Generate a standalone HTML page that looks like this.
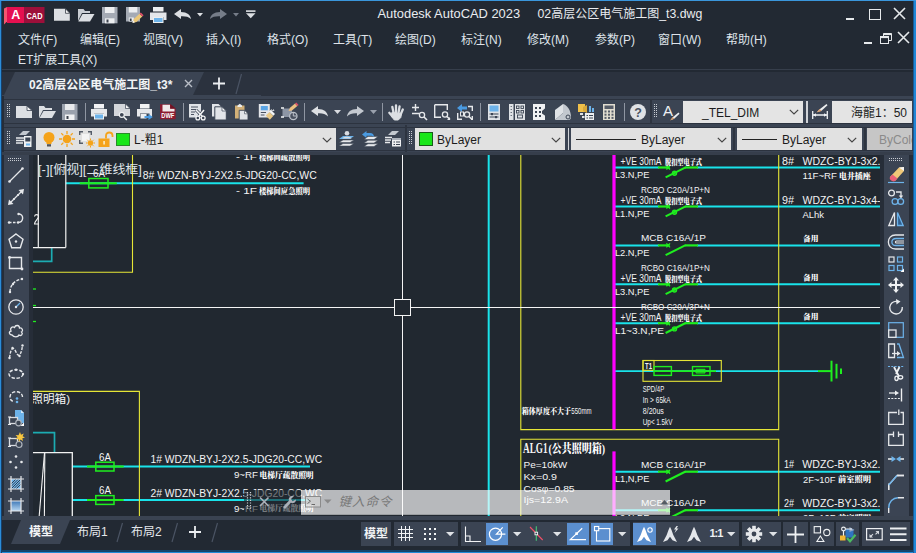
<!DOCTYPE html>
<html><head><meta charset="utf-8"><title>Autodesk AutoCAD 2023</title>
<style>
html,body{margin:0;padding:0;background:#222933;}
body{width:916px;height:553px;overflow:hidden;position:relative;font-family:"Liberation Sans","Noto Sans CJK SC",sans-serif;color:#e6e9ee;}
#win{position:absolute;left:0;top:0;width:916px;height:553px;background:#222933;overflow:hidden;}
.abs{position:absolute;display:block;}
.t{position:absolute;white-space:nowrap;line-height:1;transform-origin:0 50%;}
.menu{font-size:12px;color:#dfe3e9;top:33.5px;}
.menu2{top:53.8px;}
.cb{font-size:12px;color:#1c1c1c;}
</style></head><body>
<div id="win">
<div class="t" id="ttl1" style="left:377.5px;top:7.5px;font-size:12.9px;color:#e9ecf0;">Autodesk AutoCAD 2023</div>
<div class="t" id="ttl2" style="left:537.5px;top:7.5px;font-size:12.3px;color:#e9ecf0;">02<span style="font-size:12px">高层公区电气施工图</span>_t3.dwg</div>
<svg class="abs" style="left:4px;top:7px" width="41" height="18" viewBox="0 0 41 18" ><polygon points="0,1.5 3,0 3,14.5 0,17.5" fill="#f2566f"/><rect x="3" y="0" width="17.5" height="16" fill="#e51050"/><rect x="20.5" y="0" width="20" height="16" fill="#9c0f3a"/><text x="11.7" y="12.3" font-size="12.5" font-weight="bold" fill="#fff" text-anchor="middle" font-family="Liberation Sans, sans-serif">A</text><text x="30.5" y="11.5" font-size="8.5" font-weight="bold" fill="#fff" text-anchor="middle" font-family="Liberation Sans, sans-serif" textLength="16" lengthAdjust="spacingAndGlyphs">CAD</text></svg>
<svg class="abs" style="left:54px;top:8px" width="17" height="14" viewBox="0 0 17 14" ><path d="M0 0.800H11.500L15.800 5.300V12.800H0Z" fill="#dcdfe3"/><path d="M11.500 0.800V5.300H15.800Z" fill="#f6f7f8" stroke="#222933" stroke-width="0.7"/></svg>
<svg class="abs" style="left:78px;top:8px" width="18" height="14" viewBox="0 0 18 14" ><path d="M0 1H5.500L7 3H12V5H4L0 13Z" fill="#c9cdd3"/><path d="M4.500 6H16.500L12 13.500H0.300Z" fill="#dcdfe3"/></svg>
<svg class="abs" style="left:102px;top:7px" width="16" height="17" viewBox="0 0 16 17" ><path d="M0 0H15.500V16.300H0Z" fill="#a4aab4"/><rect x="3" y="0" width="9.500" height="6" fill="#eceef0"/><rect x="3" y="11.300" width="9.500" height="5" fill="#eceef0"/><rect x="4.500" y="12.500" width="2" height="3" fill="#3a414d"/></svg>
<svg class="abs" style="left:126px;top:7px" width="18" height="17" viewBox="0 0 18 17" ><path d="M0 0H14V14.500H0Z" fill="#a4aab4"/><rect x="2.800" y="0" width="8.500" height="5.500" fill="#eceef0"/><rect x="2.800" y="10.500" width="5" height="4" fill="#eceef0"/><rect x="3.800" y="11.500" width="1.800" height="2.500" fill="#3a414d"/><path d="M6.500 16L7.800 12L13.500 6.800L16.300 9.600L10.500 15Z" fill="#ecc878"/><path d="M13.500 6.800L14.800 5.600L17.600 8.300L16.300 9.600Z" fill="#e0506a"/><path d="M6.500 16L7.300 13.500L9 15.300Z" fill="#f4f4f4"/></svg>
<svg class="abs" style="left:150px;top:7px" width="17" height="17" viewBox="0 0 17 17" ><rect x="3" y="0" width="10.500" height="4.500" fill="#eceef0"/><path d="M0 5.500H16.500V13H13.500V10H3V13H0Z" fill="#e4e6ea"/><rect x="3.500" y="10.500" width="9.500" height="5" fill="#6db3ea" stroke="#eceef0" stroke-width="1"/></svg>
<svg class="abs" style="left:174px;top:9px" width="18" height="11" viewBox="0 0 18 11" ><path d="M0 5L7 0V3C13 3 16.5 6 17 10C14.5 7.5 11 7 7 7.2V10Z" fill="#dcdfe3"/></svg>
<svg class="abs" style="left:196.5px;top:13px" width="6" height="3.5" viewBox="0 0 6 3.5" ><path d="M0 0H6L3 3.400Z" fill="#dcdfe3"/></svg>
<svg class="abs" style="left:209px;top:9px" width="18" height="11" viewBox="0 0 18 11" ><g transform="translate(18,0) scale(-1,1)"><path d="M0 5L7 0V3C13 3 16.5 6 17 10C14.5 7.5 11 7 7 7.2V10Z" fill="#767d89"/></g></svg>
<svg class="abs" style="left:232.5px;top:13px" width="6" height="3.5" viewBox="0 0 6 3.5" ><path d="M0 0H6L3 3.400Z" fill="#767d89"/></svg>
<svg class="abs" style="left:245.5px;top:10px" width="10" height="9" viewBox="0 0 10 9" ><rect x="0" y="0.300" width="9.500" height="1.600" fill="#dcdfe3"/><path d="M0 3.200H9.500L4.750 8.300Z" fill="#dcdfe3"/></svg>
<div class="abs" style="left:846px;top:18px;width:8px;height:2px;background:#e6e9ec"></div>
<div class="abs" style="left:869px;top:9px;width:10px;height:8.700px;border:1px solid #e6e9ec;box-sizing:content-box"></div>
<svg class="abs" style="left:893px;top:7px" width="13" height="13" viewBox="0 0 13 13" ><path d="M1 1L12 12M12 1L1 12" stroke="#e6e9ec" stroke-width="1.6" fill="none"/></svg>
<div class="abs" style="left:864px;top:42px;width:8px;height:2px;background:#e6e9ec"></div>
<svg class="abs" style="left:880px;top:33px" width="12" height="11" viewBox="0 0 12 11" ><path d="M3.5 3.5V0.5H11.5V7.5H8.5" stroke="#e6e9ec" stroke-width="1" fill="none"/><rect x="0.5" y="3.5" width="8" height="7" stroke="#e6e9ec" stroke-width="1" fill="none"/><rect x="0.5" y="3.5" width="8" height="1.6" fill="#e6e9ec"/><rect x="3.5" y="0.5" width="8" height="1.6" fill="#e6e9ec"/></svg>
<svg class="abs" style="left:897px;top:31px" width="13" height="13" viewBox="0 0 13 13" ><path d="M1 1L12 12M12 1L1 12" stroke="#e6e9ec" stroke-width="1.6" fill="none"/></svg>
<div class="t menu" id="m0" style="left:18px;">文件(F)</div>
<div class="t menu" id="m1" style="left:80px;">编辑(E)</div>
<div class="t menu" id="m2" style="left:143px;">视图(V)</div>
<div class="t menu" id="m3" style="left:206px;">插入(I)</div>
<div class="t menu" id="m4" style="left:267px;">格式(O)</div>
<div class="t menu" id="m5" style="left:333px;">工具(T)</div>
<div class="t menu" id="m6" style="left:395px;">绘图(D)</div>
<div class="t menu" id="m7" style="left:461px;">标注(N)</div>
<div class="t menu" id="m8" style="left:527px;">修改(M)</div>
<div class="t menu" id="m9" style="left:595px;">参数(P)</div>
<div class="t menu" id="m10" style="left:658px;">窗口(W)</div>
<div class="t menu" id="m11" style="left:726px;">帮助(H)</div>
<div class="t menu menu2" id="m12" style="left:18px;">ET扩展工具(X)</div>
<div class="abs" style="left:1px;top:69.3px;width:912px;height:1px;background:#363e4b"></div>
<div class="abs" style="left:1px;top:72px;width:912px;height:25px;background:#2b323e;"></div>
<svg class="abs" style="left:1px;top:72px" width="260" height="25" viewBox="0 0 260 25" ><polygon points="14,0 203,0 192,23 3,23" fill="#3b4453"/><rect x="0" y="23" width="260" height="2" fill="#3b4453"/><path d="M240.5 2L235 22" stroke="#4a5363" stroke-width="1.2"/><path d="M184 8L191 15M191 8L184 15" stroke="#b9bec7" stroke-width="1.4"/><path d="M212 11.5H224M218 5.5V17.5" stroke="#eceef1" stroke-width="1.8"/></svg>
<div class="t" id="tab1" style="left:29px;top:79px;font-size:12px;font-weight:bold;color:#f2f4f6;">02高层公区电气施工图_t3*</div>
<div class="abs" style="left:1px;top:96px;width:912px;height:58px;background:#3b4453;"></div>
<div class="abs" style="left:1px;top:99.3px;width:912px;height:1.2px;background:#2c333f"></div>
<div class="abs" style="left:1px;top:123.2px;width:912px;height:1.3px;background:#2c333f"></div>
<div class="abs" style="left:1px;top:126.6px;width:912px;height:1px;background:#2c333f"></div>
<div class="abs" style="left:1px;top:150.4px;width:912px;height:1.1px;background:#2c333f"></div>
<div class="abs" style="left:1.5px;top:96px;width:2.5px;height:58px;background:#262d38"></div>
<div class="abs" style="left:1px;top:151.500px;width:912px;height:3.500px;background:#363e4b"></div>
<div class="abs" style="left:649.5px;top:99px;width:2px;height:25px;background:#2d3440"></div>
<div class="abs" style="left:404.5px;top:125px;width:2px;height:27px;background:#2d3440"></div>
<svg class="abs" style="left:7px;top:104px" width="4" height="14" viewBox="0 0 4 14" shape-rendering="crispEdges"><path d="M0.5 0V14M2.5 0V14" stroke="#c9cdd3" stroke-width="1" stroke-dasharray="1 1" fill="none"/></svg>
<svg class="abs" style="left:16px;top:104px" width="18" height="18" viewBox="0 0 18 18" overflow="visible"><path d="M0 2H11L16 6.5V14H0Z" fill="#dcdfe3"/><path d="M11 2V6.5H16Z" fill="#f4f5f6" stroke="#3b4453" stroke-width="0.8"/></svg>
<svg class="abs" style="left:39px;top:104px" width="18" height="18" viewBox="0 0 18 18" overflow="visible"><path d="M0 2H5L6.5 4H13V6H4L0 14Z" fill="#dcdfe3"/><path d="M4.5 7H17L13 14H0.5Z" fill="#dcdfe3"/></svg>
<svg class="abs" style="left:62px;top:104px" width="18" height="18" viewBox="0 0 18 18" overflow="visible"><path d="M0 0H15.500V16H0Z" fill="#9aa1ad"/><rect x="3" y="0" width="9.500" height="6" fill="#e8eaed"/><rect x="3" y="10.500" width="9.500" height="5.500" fill="#f0f1f3"/><rect x="4.500" y="12" width="2" height="3" fill="#3a414d"/></svg>
<svg class="abs" style="left:91px;top:104px" width="18" height="18" viewBox="0 0 18 18" overflow="visible"><rect x="3" y="0" width="10" height="4.500" fill="#f2f3f5"/><path d="M0 5H16V12.500H13V9.500H3V12.500H0Z" fill="#e6e8eb"/><rect x="3.500" y="10" width="9" height="5" fill="#6db3ea" stroke="#f2f3f5" stroke-width="1"/></svg>
<svg class="abs" style="left:114px;top:104px" width="18" height="18" viewBox="0 0 18 18" overflow="visible"><path d="M0 0H11.500L16 4.500V12H0Z" fill="#d3d6db"/><path d="M11.500 0V4.500H16Z" fill="#f4f5f6" stroke="#3b4453" stroke-width="0.700"/><circle cx="7.800" cy="10.800" r="2.500" fill="#3b4453" stroke="#eef0f2" stroke-width="1.200"/><path d="M9.700 12.800L12.800 16" stroke="#eef0f2" stroke-width="1.500"/></svg>
<svg class="abs" style="left:137px;top:104px" width="18" height="18" viewBox="0 0 18 18" overflow="visible"><rect x="3" y="0" width="9.500" height="4.500" fill="#f2f3f5"/><path d="M0 5H15V12.500H12.500V9.500H3V12.500H0Z" fill="#e6e8eb"/><rect x="3.500" y="10" width="6" height="4.500" fill="#eef0f2"/><path d="M7.500 12H11.500V10L15.800 13L11.500 16V14H7.500Z" fill="#4a9ae0"/></svg>
<svg class="abs" style="left:160px;top:104px" width="18" height="18" viewBox="0 0 18 18" overflow="visible"><path d="M0 0.300H10.500L15.600 4.500V15.300H0Z" fill="#8c1b30"/><path d="M2.500 0.800H10V4.800H14.500V7.500H2.500Z" fill="#f0e9ea"/><path d="M10.500 0.300L15.600 4.500H10.500Z" fill="#6e1424"/><text x="7.800" y="14.300" font-size="6.800" font-weight="bold" fill="#fff" text-anchor="middle" font-family="Liberation Sans, sans-serif" textLength="13" lengthAdjust="spacingAndGlyphs">DWF</text></svg>
<svg class="abs" style="left:189px;top:104px" width="18" height="18" viewBox="0 0 18 18" overflow="visible"><path d="M0 0H12V13.500H0Z" fill="#dfe2e6"/><path d="M2 3H9M2 5.500H7M2 8H6M2 10.500H5" stroke="#4a5261" stroke-width="1.100"/><path d="M7 6L13.500 12.500M15 6L9.500 12.500" stroke="#3b4453" stroke-width="3"/><path d="M7 6L13.500 12.500M15 6L9.500 12.500" stroke="#f4f5f6" stroke-width="1.500"/><circle cx="8.800" cy="14" r="1.900" fill="#3b4453" stroke="#f4f5f6" stroke-width="1.300"/><circle cx="14.200" cy="14" r="1.900" fill="#3b4453" stroke="#f4f5f6" stroke-width="1.300"/></svg>
<svg class="abs" style="left:212px;top:104px" width="18" height="18" viewBox="0 0 18 18" overflow="visible"><path d="M0 0H6.500L9.500 3V12.500H0Z" fill="#e1e4e8"/><path d="M2.800 2.800H10L14.300 7V16H2.800Z" fill="#e1e4e8" stroke="#3b4453" stroke-width="1"/><path d="M10 2.800V7H14.300Z" fill="#f6f7f8" stroke="#3b4453" stroke-width="0.700"/></svg>
<svg class="abs" style="left:235px;top:104px" width="18" height="18" viewBox="0 0 18 18" overflow="visible"><path d="M0 1.500H9.500V14.500H0Z" fill="#d2b078"/><path d="M2.500 1.500L4.800 -0.300L7 1.500V3H2.500Z" fill="#eceef0"/><path d="M4.200 6.300H9.500L13 9.800V16H4.200Z" fill="#e1e4e8" stroke="#3b4453" stroke-width="0.900"/><path d="M9.500 6.300V9.800H13Z" fill="#f6f7f8" stroke="#3b4453" stroke-width="0.600"/></svg>
<svg class="abs" style="left:258px;top:104px" width="18" height="18" viewBox="0 0 18 18" overflow="visible"><path d="M0.800 0H11.800V13.500H0.800Z" fill="#e4e6ea"/><rect x="2.800" y="2" width="7" height="4.300" fill="#5aa5e6"/><path d="M2.800 8.500H8M2.800 11H6.500" stroke="#4a5261" stroke-width="1.100"/><path d="M7.800 11.500L11.500 8L15.300 12L11.800 15.800Z" fill="#e8c886"/><path d="M11 7.500L12.800 5.800L17 10L15.300 11.800Z" fill="#f4f5f6"/><path d="M13.500 5.500L14.500 7M15.500 5.500L15.800 7" stroke="#f4f5f6" stroke-width="1"/></svg>
<svg class="abs" style="left:281px;top:104px" width="18" height="18" viewBox="0 0 18 18" overflow="visible"><rect x="1.500" y="4.500" width="9.500" height="8.500" fill="#8d96a5"/><path d="M0 4H3M0 13H3" stroke="#f4f5f6" stroke-width="1.600"/><circle cx="12.300" cy="12" r="3.700" fill="#4a5261" stroke="#b9bfc8" stroke-width="1.300"/><path d="M12.300 12V8.800M12.300 12H15.500" stroke="#b9bfc8" stroke-width="1"/><path d="M7.500 7L9 3.800L14 -0.500L16.300 2L11 6.500Z" fill="#ecc080"/><path d="M14 -0.500L15.300 -1.600L17.600 0.900L16.300 2Z" fill="#e0506a"/></svg>
<div class="abs" style="left:85px;top:103px;width:1px;height:18px;background:#8f96a2"></div>
<div class="abs" style="left:183px;top:103px;width:1px;height:18px;background:#8f96a2"></div>
<div class="abs" style="left:304px;top:103px;width:1px;height:18px;background:#8f96a2"></div>
<div class="abs" style="left:382px;top:103px;width:1px;height:18px;background:#8f96a2"></div>
<div class="abs" style="left:480px;top:103px;width:1px;height:18px;background:#8f96a2"></div>
<div class="abs" style="left:624px;top:103px;width:1px;height:18px;background:#8f96a2"></div>
<svg class="abs" style="left:311px;top:105px" width="18" height="18" viewBox="0 0 18 18" overflow="visible"><path d="M0 6L7 1V4C13 4 16.5 7 17 11.5C14.5 8.5 11 8 7 8.2V11Z" fill="#dcdfe3"/></svg>
<svg class="abs" style="left:334px;top:110px" width="7" height="4" viewBox="0 0 7 4" ><path d="M0 0H7L3.5 4Z" fill="#d9dce1"/></svg>
<svg class="abs" style="left:347px;top:105px" width="18" height="18" viewBox="0 0 18 18" overflow="visible"><g transform="translate(17,0) scale(-1,1)"><path d="M0 6L7 1V4C13 4 16.5 7 17 11.5C14.5 8.5 11 8 7 8.2V11Z" fill="#c3c8cf"/></g></svg>
<svg class="abs" style="left:370px;top:110px" width="7" height="4" viewBox="0 0 7 4" ><path d="M0 0H7L3.5 4Z" fill="#9aa1ad"/></svg>
<svg class="abs" style="left:388px;top:104px" width="18" height="18" viewBox="0 0 18 18" overflow="visible"><g stroke="#dcdfe3" stroke-width="2.300" stroke-linecap="round"><path d="M5.600 9L4.300 2.800M8 8.500V1.300M10.500 9L11.600 2.300M12.600 10.500L14.800 5.500M4.500 12.500L1.300 8.800"/></g><path d="M3.800 8.500L13.600 9.500L12.800 13.500L10.300 16H6.300L3.500 12.500Z" fill="#dcdfe3" stroke="#dcdfe3" stroke-width="1" stroke-linejoin="round"/></svg>
<svg class="abs" style="left:411px;top:104px" width="18" height="18" viewBox="0 0 18 18" overflow="visible"><path d="M1 3.5H8M4.5 0V7M1 9.5H8" stroke="#e6e8eb" stroke-width="1.4"/><circle cx="11" cy="11" r="2.6" fill="none" stroke="#e6e8eb" stroke-width="1.3"/><path d="M13 13L16 16" stroke="#e6e8eb" stroke-width="1.6"/></svg>
<svg class="abs" style="left:434px;top:104px" width="18" height="18" viewBox="0 0 18 18" overflow="visible"><path d="M0.7 0.7H13.3V6M0.7 0.7V13.3H7" fill="none" stroke="#e6e8eb" stroke-width="1.4"/><circle cx="11" cy="10.5" r="2.6" fill="none" stroke="#e6e8eb" stroke-width="1.3"/><path d="M13 12.5L16 15.5" stroke="#e6e8eb" stroke-width="1.6"/><path d="M13 16H16V13Z" fill="#e6e8eb"/></svg>
<svg class="abs" style="left:457px;top:104px" width="18" height="18" viewBox="0 0 18 18" overflow="visible"><path d="M0 4L5 0V2.5H10V5.5H5V8Z" fill="#4a9ae0"/><path d="M11 2.5H15.3V7M0.7 9V15.3H5M15.3 12V15.3H14" fill="none" stroke="#e6e8eb" stroke-width="1.4"/><rect x="3.5" y="8" width="3" height="4" fill="none" stroke="#e6e8eb" stroke-width="1"/><circle cx="10" cy="10.5" r="2.6" fill="none" stroke="#e6e8eb" stroke-width="1.3"/><path d="M12 12.5L15 15.5" stroke="#e6e8eb" stroke-width="1.6"/></svg>
<svg class="abs" style="left:487px;top:104px" width="18" height="18" viewBox="0 0 18 18" overflow="visible"><rect x="1" y="0" width="12" height="16" fill="#dfe2e6"/><rect x="2.5" y="1.5" width="9" height="6" fill="#6db3ea"/><path d="M2.5 10H11.5M2.5 13H11.5" stroke="#3b4453" stroke-width="1.1"/><rect x="4" y="9" width="2" height="2.2" fill="#3b4453"/><rect x="8" y="12" width="2" height="2.2" fill="#3b4453"/></svg>
<svg class="abs" style="left:509px;top:104px" width="18" height="18" viewBox="0 0 18 18" overflow="visible"><rect x="0" y="0" width="4.5" height="16" fill="#dfe2e6"/><path d="M2.2 2V14" stroke="#3b4453" stroke-width="1" stroke-dasharray="1 2"/><rect x="6" y="0" width="10" height="16" fill="#dfe2e6"/><rect x="7.5" y="2" width="2.5" height="2.5" fill="none" stroke="#3b4453" stroke-width="0.9"/><rect x="12" y="2" width="2.5" height="2.5" fill="none" stroke="#3b4453" stroke-width="0.9"/><rect x="7.5" y="6.5" width="2.5" height="2.5" fill="none" stroke="#3b4453" stroke-width="0.9"/><rect x="12" y="6.5" width="2.5" height="2.5" fill="none" stroke="#3b4453" stroke-width="0.9"/><rect x="8.5" y="11" width="5" height="3" fill="none" stroke="#3b4453" stroke-width="0.9"/></svg>
<svg class="abs" style="left:532px;top:104px" width="18" height="18" viewBox="0 0 18 18" overflow="visible"><path d="M1 0H13V16H1Z" fill="#f0f1f3"/><path d="M10 7L13.5 4V12L10 9.5Z" fill="#3b4453"/><rect x="3" y="3" width="2" height="2" fill="#3b4453"/><rect x="7" y="3" width="2" height="2" fill="#3b4453"/><rect x="3" y="7" width="2" height="2" fill="#3b4453"/><rect x="7" y="7" width="2" height="2" fill="#3b4453"/><rect x="3" y="11" width="2" height="2" fill="#3b4453"/><rect x="7" y="11" width="2" height="2" fill="#3b4453"/></svg>
<svg class="abs" style="left:555px;top:104px" width="18" height="18" viewBox="0 0 18 18" overflow="visible"><path d="M0 6L8 0V9L0 16Z" fill="#dfe2e6"/><path d="M8 0C12 1 16 6 16 13C16 15 15 16 13.5 16H0L8 9Z" fill="#c3c8cf"/><circle cx="13" cy="13" r="2" fill="none" stroke="#3b4453" stroke-width="1"/></svg>
<svg class="abs" style="left:578px;top:104px" width="18" height="18" viewBox="0 0 18 18" overflow="visible"><rect x="0" y="0" width="7" height="8" fill="#f0c04a"/><path d="M5 3L9 1V9L5 7Z" fill="#d8a83a"/><rect x="11" y="2" width="2" height="6" fill="#6db3ea"/><rect x="14" y="4" width="2" height="4" fill="#6db3ea"/><rect x="2" y="9" width="3" height="2" fill="#dfe2e6"/><rect x="4" y="12" width="2.5" height="2" fill="#dfe2e6"/><rect x="7" y="9" width="9" height="7" fill="#eceef0"/><path d="M8.5 11.5H10M11 11.5H15M8.5 14H10M11 14H15" stroke="#3b4453" stroke-width="1"/></svg>
<svg class="abs" style="left:602px;top:104px" width="18" height="18" viewBox="0 0 18 18" overflow="visible"><rect x="1" y="0" width="12" height="16" fill="#e1ddd0"/><rect x="2.5" y="1.5" width="9" height="3.5" fill="#565d68"/><g fill="#565d68"><rect x="2.5" y="6.5" width="2" height="2"/><rect x="6" y="6.5" width="2" height="2"/><rect x="9.5" y="6.5" width="2" height="2"/><rect x="2.5" y="9.7" width="2" height="2"/><rect x="6" y="9.7" width="2" height="2"/><rect x="9.5" y="9.7" width="2" height="2"/><rect x="2.5" y="12.9" width="2" height="2"/><rect x="6" y="12.9" width="2" height="2"/><rect x="9.5" y="12.9" width="2" height="2"/></g></svg>
<svg class="abs" style="left:630px;top:104px" width="18" height="18" viewBox="0 0 18 18" overflow="visible"><circle cx="8" cy="8" r="8" fill="#dfe2e6"/><text x="8" y="12.5" font-size="12.5" font-weight="bold" fill="#4a5261" text-anchor="middle" font-family="Liberation Sans, sans-serif">?</text></svg>
<svg class="abs" style="left:654px;top:104px" width="4" height="14" viewBox="0 0 4 14" shape-rendering="crispEdges"><path d="M0.5 0V14M2.5 0V14" stroke="#c9cdd3" stroke-width="1" stroke-dasharray="1 1" fill="none"/></svg>
<svg class="abs" style="left:663px;top:104px" width="18" height="18" viewBox="0 0 18 18" overflow="visible"><text x="5" y="12" font-size="15" fill="#eef0f2" text-anchor="middle" font-family="Liberation Sans, sans-serif">A</text><path d="M8 16L10 13L15.5 8.5L16.5 9.8L11.5 14.5Z" fill="#eef0f2"/><path d="M7 16.5L9.5 13L11.5 14.8Z" fill="#d9a070"/></svg>
<div class="abs" style="left:683px;top:101px;width:120px;height:22px;background:#e4e4e4"></div>
<div class="t cb" id="cb_tel" style="left:702px;top:107px;">_TEL_DIM</div>
<svg class="abs" style="left:789px;top:109px" width="10" height="6" viewBox="0 0 10 6" ><path d="M0.8 0.8L5 5L9.2 0.8" stroke="#444" stroke-width="1.2" fill="none"/></svg>
<div class="abs" style="left:806px;top:101px;width:1.5px;height:22px;background:#d0d3d8"></div>
<svg class="abs" style="left:812px;top:103px" width="18" height="18" viewBox="0 0 18 18" overflow="visible"><path d="M0.7 8V16M15.3 8V16M1 12H15" stroke="#eef0f2" stroke-width="1.3" fill="none"/><path d="M1 12L4 10.3V13.7ZM15 12L12 10.3V13.7Z" fill="#eef0f2"/><path d="M5 9L8 6L14.5 1L15.5 2.3L9.5 7.8Z" fill="#eef0f2"/><path d="M4.5 9.5L7.5 6L9.8 8Z" fill="#d9a070"/></svg>
<div class="abs" style="left:832px;top:101px;width:80px;height:22px;background:#e4e4e4"></div>
<div class="t cb" id="cb_hl" style="left:851px;top:107px;">海龍1：50</div>
<svg class="abs" style="left:7px;top:131px" width="4" height="13" viewBox="0 0 4 13" shape-rendering="crispEdges"><path d="M0.5 0V13M2.5 0V13" stroke="#c9cdd3" stroke-width="1" stroke-dasharray="1 1" fill="none"/></svg>
<svg class="abs" style="left:16px;top:131px" width="18" height="18" viewBox="0 0 18 18" overflow="visible"><path d="M3 4L7 0H14L10 4Z" fill="#c3c8cf"/><path d="M0 7H8M0 9.5H8M0 12H7" stroke="#e6e8eb" stroke-width="1.5"/><rect x="8" y="5" width="7.5" height="11" fill="#eef0f2"/><rect x="9.3" y="6.5" width="5" height="4" fill="#3b4453"/><path d="M10 12.5H14V14.5H10Z" fill="#6db3ea"/></svg>
<div class="abs" style="left:36px;top:128px;width:300px;height:22px;background:#e1e1e1"></div>
<svg class="abs" style="left:41px;top:131px" width="18" height="18" viewBox="0 0 18 18" overflow="visible"><circle cx="8" cy="6.5" r="5.5" fill="#f5a31a"/><rect x="5.5" y="11" width="5" height="2" fill="#f5a31a"/><rect x="6" y="13.2" width="4" height="2.3" fill="#555"/></svg>
<svg class="abs" style="left:59px;top:131px" width="18" height="18" viewBox="0 0 18 18" overflow="visible"><circle cx="8" cy="8" r="4.3" fill="#f5a31a"/><path d="M8 0V3M8 13V16M0 8H3M13 8H16M2.3 2.3L4.4 4.4M11.6 11.6L13.7 13.7M13.7 2.3L11.6 4.4M2.3 13.7L4.4 11.6" stroke="#f5a31a" stroke-width="1.3"/></svg>
<svg class="abs" style="left:79px;top:131px" width="18" height="18" viewBox="0 0 18 18" overflow="visible"><path d="M0.7 4V0.7H4M9 0.7H12.3V4M0.7 9V12.3H4" stroke="#555c68" stroke-width="1.4" fill="none"/><rect x="3" y="3" width="7" height="7" fill="#f4f4f4"/><circle cx="11.5" cy="12" r="2.7" fill="#f5a31a"/><path d="M11.5 7.5V9M11.5 15V16.5M7 12H8.5M14.5 12H16M8.3 8.8L9.3 9.8M14.7 8.8L13.7 9.8M8.3 15.2L9.3 14.2M14.7 15.2L13.7 14.2" stroke="#f5a31a" stroke-width="1"/></svg>
<svg class="abs" style="left:98px;top:131px" width="18" height="18" viewBox="0 0 18 18" overflow="visible"><rect x="0.5" y="7.5" width="11" height="8.5" fill="#f5a31a"/><path d="M8 7.5V4.5C8 0.5 14.5 0.5 14.5 4.5V6" stroke="#f5a31a" stroke-width="1.8" fill="none"/><rect x="5.2" y="10" width="1.8" height="3.5" fill="#fbe3b0"/></svg>
<div class="abs" style="left:116.300px;top:132.800px;width:13.400px;height:13.400px;background:#19e619;box-shadow:inset 0 0 0 1px #2a8a2a"></div>
<div class="t cb" id="cb_l" style="left:134px;top:133.5px;">L-粗1</div>
<svg class="abs" style="left:322px;top:137px" width="10" height="6" viewBox="0 0 10 6" ><path d="M0.8 0.8L5 5L9.2 0.8" stroke="#444" stroke-width="1.2" fill="none"/></svg>
<svg class="abs" style="left:339px;top:131px" width="18" height="18" viewBox="0 0 18 18" overflow="visible"><path d="M0 8L4 5H15L11 8Z" fill="#6db3ea"/><path d="M0 11.5L4 9H15L11 11.5ZM0 15L4 12.5H15L11 15Z" fill="#e6e8eb" stroke="#3b4453" stroke-width="0.5"/><circle cx="8" cy="2.3" r="2.3" fill="#d9dce1"/><path d="M3.5 7.5C3.5 5 12.5 5 12.5 7.5Z" fill="#d9dce1"/></svg>
<svg class="abs" style="left:362px;top:131px" width="18" height="18" viewBox="0 0 18 18" overflow="visible"><path d="M2 8.5L6 5.5H16L12 8.5ZM2 12L6 9.3H16L12 12ZM2 15.5L6 12.8H16L12 15.5Z" fill="#e6e8eb" stroke="#3b4453" stroke-width="0.5"/><path d="M0 3.5L4.5 0V2H8C10.5 2 12 3.5 12 6C11 4.8 10 4.8 8 4.8H4.5V7Z" fill="#4a9ae0"/></svg>
<svg class="abs" style="left:385px;top:131px" width="18" height="18" viewBox="0 0 18 18" overflow="visible"><path d="M3 4L7 0H14L10 4Z" fill="#c3c8cf"/><path d="M0 6.5H7M0 9H6M0 11.5H5" stroke="#e6e8eb" stroke-width="1.5"/><rect x="7" y="7" width="9" height="8.5" fill="#eef0f2"/><rect x="7" y="7" width="9" height="2" fill="#aeb4bd"/><path d="M8.5 11H10M11 11H15M8.5 13.5H10M11 13.5H15" stroke="#3b4453" stroke-width="1"/></svg>
<svg class="abs" style="left:409px;top:131px" width="4" height="13" viewBox="0 0 4 13" shape-rendering="crispEdges"><path d="M0.5 0V13M2.5 0V13" stroke="#c9cdd3" stroke-width="1" stroke-dasharray="1 1" fill="none"/></svg>
<div class="abs" style="left:414.5px;top:128px;width:150.5px;height:22px;background:#e1e1e1"></div>
<div class="abs" style="left:419.200px;top:132.200px;width:13.700px;height:13.600px;background:#19e619;box-shadow:inset 0 0 0 1px #1a5a1a"></div>
<div class="t cb" id="cb_b1" style="left:437px;top:133.5px;">ByLayer</div>
<svg class="abs" style="left:551px;top:137px" width="10" height="6" viewBox="0 0 10 6" ><path d="M0.8 0.8L5 5L9.2 0.8" stroke="#444" stroke-width="1.2" fill="none"/></svg>
<div class="abs" style="left:567.5px;top:128px;width:1.5px;height:22px;background:#d0d3d8"></div>
<div class="abs" style="left:571px;top:128px;width:160px;height:22px;background:#e1e1e1"></div>
<div class="abs" style="left:576px;top:139px;width:60px;height:1.3px;background:#222"></div>
<div class="t cb" id="cb_b2" style="left:641px;top:133.5px;">ByLayer</div>
<svg class="abs" style="left:717px;top:137px" width="10" height="6" viewBox="0 0 10 6" ><path d="M0.8 0.8L5 5L9.2 0.8" stroke="#444" stroke-width="1.2" fill="none"/></svg>
<div class="abs" style="left:733px;top:128px;width:2px;height:22px;background:#2d3440"></div>
<div class="abs" style="left:737px;top:128px;width:125px;height:22px;background:#e1e1e1"></div>
<div class="abs" style="left:742px;top:139px;width:35px;height:1.3px;background:#222"></div>
<div class="t cb" id="cb_b3" style="left:782px;top:133.5px;">ByLayer</div>
<svg class="abs" style="left:847px;top:137px" width="10" height="6" viewBox="0 0 10 6" ><path d="M0.8 0.8L5 5L9.2 0.8" stroke="#444" stroke-width="1.2" fill="none"/></svg>
<div class="abs" style="left:864px;top:128px;width:2px;height:22px;background:#2d3440"></div>
<div class="abs" style="left:867px;top:128px;width:45px;height:22px;background:#c6c6c6"></div>
<div class="abs" style="left:867px;top:128px;width:45px;height:22px;overflow:hidden"><div class="t cb" id="cb_bc" style="left:12px;top:5.5px;color:#8a8a8a">ByColor</div></div>
<svg class="abs" style="left:33px;top:155px" width="847" height="361" viewBox="33 155 847 361">
<rect x="33" y="155" width="847" height="361" fill="#212830"/>
<line x1="65.8" y1="183.2" x2="303.6" y2="183.2" stroke="#19e3ea" stroke-width="2"/>
<line x1="72.3" y1="466.6" x2="310" y2="466.6" stroke="#19e3ea" stroke-width="2"/>
<line x1="72.3" y1="500" x2="310" y2="500" stroke="#19e3ea" stroke-width="2"/>
<line x1="488.7" y1="155" x2="488.7" y2="516" stroke="#19e3ea" stroke-width="2"/>
<line x1="614" y1="167.5" x2="659" y2="167.5" stroke="#19e3ea" stroke-width="2"/>
<line x1="697" y1="167.5" x2="880" y2="167.5" stroke="#19e3ea" stroke-width="2"/>
<line x1="614" y1="206.5" x2="659" y2="206.5" stroke="#19e3ea" stroke-width="2"/>
<line x1="697" y1="206.5" x2="880" y2="206.5" stroke="#19e3ea" stroke-width="2"/>
<line x1="614" y1="245.4" x2="659" y2="245.4" stroke="#19e3ea" stroke-width="2"/>
<line x1="697" y1="245.4" x2="880" y2="245.4" stroke="#19e3ea" stroke-width="2"/>
<line x1="614" y1="284.3" x2="659" y2="284.3" stroke="#19e3ea" stroke-width="2"/>
<line x1="697" y1="284.3" x2="880" y2="284.3" stroke="#19e3ea" stroke-width="2"/>
<line x1="614" y1="323.2" x2="659" y2="323.2" stroke="#19e3ea" stroke-width="2"/>
<line x1="697" y1="323.2" x2="880" y2="323.2" stroke="#19e3ea" stroke-width="2"/>
<line x1="614" y1="471.7" x2="659" y2="471.7" stroke="#19e3ea" stroke-width="2"/>
<line x1="697" y1="471.7" x2="880" y2="471.7" stroke="#19e3ea" stroke-width="2"/>
<line x1="614" y1="510.2" x2="659" y2="510.2" stroke="#19e3ea" stroke-width="2"/>
<line x1="697" y1="510.2" x2="880" y2="510.2" stroke="#19e3ea" stroke-width="2"/>
<line x1="614" y1="371.1" x2="818" y2="371.1" stroke="#19e3ea" stroke-width="1.6"/>
<polyline points="33,261.3 51.7,261.3 51.7,247.6" stroke="#1cacb2" stroke-width="1.7" fill="none"/>
<polyline points="33,432.7 54.5,432.7 54.5,452.7" stroke="#1cacb2" stroke-width="1.7" fill="none"/>
<polyline points="132.5,155 132.5,272.3 33,272.3" stroke="#e6e636" stroke-width="1.1" fill="none"/>
<polyline points="33,391.4 139.4,391.4 139.4,516" stroke="#e6e636" stroke-width="1.1" fill="none"/>
<polyline points="520.8,155 520.8,429.6 778.7,429.6 778.7,155" stroke="#e6e636" stroke-width="1.1" fill="none"/>
<polyline points="520.8,516 520.8,439.3 778.7,439.3 778.7,516" stroke="#e6e636" stroke-width="1.1" fill="none"/>
<rect x="643" y="360.5" width="78.3" height="20.8" stroke="#e6e636" stroke-width="1.1" fill="none"/>
<rect x="643" y="360.5" width="11" height="9.8" stroke="#e6e636" stroke-width="1.1" fill="none"/>
<line x1="614" y1="155" x2="614" y2="429.6" stroke="#ff00ff" stroke-width="3.2"/>
<line x1="614" y1="451.4" x2="614" y2="516" stroke="#ff00ff" stroke-width="3.2"/>
<line x1="38.3" y1="155" x2="38.3" y2="247.6" stroke="#f2f2f2" stroke-width="1.2"/>
<line x1="65.8" y1="155" x2="65.8" y2="247.6" stroke="#f2f2f2" stroke-width="1.2"/>
<line x1="33" y1="247.6" x2="65.8" y2="247.6" stroke="#f2f2f2" stroke-width="1.4"/>
<path d="M34.5 216.5C35 214 38.5 214 38.5 216.5C38.5 219 34.500 221 34.500 224H39" stroke="#f2f2f2" stroke-width="1.1" fill="none"/>
<polyline points="33,452.7 72.3,452.7 72.3,516" stroke="#f2f2f2" stroke-width="1.3" fill="none"/>
<line x1="44.5" y1="453" x2="39.2" y2="516" stroke="#f2f2f2" stroke-width="1.1"/>
<line x1="44.8" y1="453" x2="44.4" y2="516" stroke="#f2f2f2" stroke-width="1.1"/>
<line x1="33" y1="289" x2="36" y2="289" stroke="#1fee1f" stroke-width="1.3"/>
<line x1="33" y1="305.5" x2="36" y2="305.5" stroke="#1fee1f" stroke-width="1.3"/>
<line x1="33" y1="321.5" x2="36" y2="321.5" stroke="#1fee1f" stroke-width="1.3"/>
<line x1="79.7" y1="183.2" x2="116.8" y2="183.2" stroke="#1fee1f" stroke-width="2"/><rect x="88.8" y="178.5" width="19.200000000000003" height="9.4" stroke="#1fee1f" stroke-width="1.5" fill="none"/>
<line x1="87" y1="466.6" x2="123.7" y2="466.6" stroke="#1fee1f" stroke-width="2"/><rect x="95.8" y="462.20000000000005" width="18.200000000000003" height="8.8" stroke="#1fee1f" stroke-width="1.5" fill="none"/>
<line x1="87" y1="500" x2="123.7" y2="500" stroke="#1fee1f" stroke-width="2"/><rect x="95.8" y="495.6" width="18.200000000000003" height="8.8" stroke="#1fee1f" stroke-width="1.5" fill="none"/>
<line x1="658" y1="167.5" x2="669.6" y2="167.5" stroke="#1fee1f" stroke-width="2.2"/><path d="M666.4 165.5L670 169.5M670 165.5L666.4 169.5" stroke="#1fee1f" stroke-width="1.4"/><line x1="665.6" y1="177.3" x2="685.6" y2="167.3" stroke="#1fee1f" stroke-width="2"/><line x1="685" y1="167.5" x2="698" y2="167.5" stroke="#1fee1f" stroke-width="2.2"/><circle cx="674.5" cy="173.2" r="2" stroke="#1fee1f" stroke-width="1.4" fill="#1fee1f" fill-opacity="0.45"/>
<line x1="658" y1="206.5" x2="669.6" y2="206.5" stroke="#1fee1f" stroke-width="2.2"/><path d="M666.4 204.5L670 208.5M670 204.5L666.4 208.5" stroke="#1fee1f" stroke-width="1.4"/><line x1="665.6" y1="216.3" x2="685.6" y2="206.3" stroke="#1fee1f" stroke-width="2"/><line x1="685" y1="206.5" x2="698" y2="206.5" stroke="#1fee1f" stroke-width="2.2"/><circle cx="674.5" cy="212.2" r="2" stroke="#1fee1f" stroke-width="1.4" fill="#1fee1f" fill-opacity="0.45"/>
<line x1="658" y1="245.4" x2="669.6" y2="245.4" stroke="#1fee1f" stroke-width="2.2"/><path d="M666.4 243.4L670 247.4M670 243.4L666.4 247.4" stroke="#1fee1f" stroke-width="1.4"/><line x1="665.6" y1="255.20000000000002" x2="685.6" y2="245.20000000000002" stroke="#1fee1f" stroke-width="2"/><line x1="685" y1="245.4" x2="698" y2="245.4" stroke="#1fee1f" stroke-width="2.2"/>
<line x1="658" y1="284.3" x2="669.6" y2="284.3" stroke="#1fee1f" stroke-width="2.2"/><path d="M666.4 282.3L670 286.3M670 282.3L666.4 286.3" stroke="#1fee1f" stroke-width="1.4"/><line x1="665.6" y1="294.1" x2="685.6" y2="284.1" stroke="#1fee1f" stroke-width="2"/><line x1="685" y1="284.3" x2="698" y2="284.3" stroke="#1fee1f" stroke-width="2.2"/><circle cx="674.5" cy="290.0" r="2" stroke="#1fee1f" stroke-width="1.4" fill="#1fee1f" fill-opacity="0.45"/>
<line x1="658" y1="323.2" x2="669.6" y2="323.2" stroke="#1fee1f" stroke-width="2.2"/><path d="M666.4 321.2L670 325.2M670 321.2L666.4 325.2" stroke="#1fee1f" stroke-width="1.4"/><line x1="665.6" y1="333.0" x2="685.6" y2="323.0" stroke="#1fee1f" stroke-width="2"/><line x1="685" y1="323.2" x2="698" y2="323.2" stroke="#1fee1f" stroke-width="2.2"/><circle cx="674.5" cy="328.9" r="2" stroke="#1fee1f" stroke-width="1.4" fill="#1fee1f" fill-opacity="0.45"/>
<line x1="658" y1="471.7" x2="669.6" y2="471.7" stroke="#1fee1f" stroke-width="2.2"/><path d="M666.4 469.7L670 473.7M670 469.7L666.4 473.7" stroke="#1fee1f" stroke-width="1.4"/><line x1="665.6" y1="481.5" x2="685.6" y2="471.5" stroke="#1fee1f" stroke-width="2"/><line x1="685" y1="471.7" x2="698" y2="471.7" stroke="#1fee1f" stroke-width="2.2"/>
<line x1="658" y1="510.2" x2="669.6" y2="510.2" stroke="#1fee1f" stroke-width="2.2"/><path d="M666.4 508.2L670 512.2M670 508.2L666.4 512.2" stroke="#1fee1f" stroke-width="1.4"/><line x1="665.6" y1="520.0" x2="685.6" y2="510.0" stroke="#1fee1f" stroke-width="2"/><line x1="685" y1="510.2" x2="698" y2="510.2" stroke="#1fee1f" stroke-width="2.2"/>
<line x1="654" y1="371.1" x2="716" y2="371.1" stroke="#1fee1f" stroke-width="1.8"/>
<rect x="654" y="366.6" width="17.4" height="8.8" stroke="#1fee1f" stroke-width="1.4" fill="none"/>
<rect x="692.5" y="366.6" width="17.5" height="8.8" stroke="#1fee1f" stroke-width="1.4" fill="none"/>
<path d="M696 369.3H705V373H696Z" stroke="#1fee1f" stroke-width="1" fill="#1fee1f" fill-opacity="0.5"/>
<line x1="818" y1="371.1" x2="831.5" y2="371.1" stroke="#1fee1f" stroke-width="2"/>
<line x1="831.5" y1="360.7" x2="831.5" y2="381.5" stroke="#1fee1f" stroke-width="2"/>
<line x1="836.5" y1="363.8" x2="836.5" y2="378.5" stroke="#1fee1f" stroke-width="2"/>
<line x1="841" y1="368.4" x2="841" y2="374" stroke="#1fee1f" stroke-width="2"/>
<text x="142.7" y="179.3" font-family="Liberation Sans, sans-serif" font-size="10.75" font-weight="normal" fill="#f4f4f4" textLength="174.0" lengthAdjust="spacingAndGlyphs" >8# WDZN-BYJ-2X2.5-JDG20-CC,WC</text>
<text x="150.5" y="462.5" font-family="Liberation Sans, sans-serif" font-size="10.61" font-weight="normal" fill="#f4f4f4" textLength="171.8" lengthAdjust="spacingAndGlyphs" >1# WDZN-BYJ-2X2.5-JDG20-CC,WC</text>
<text x="150.5" y="496.6" font-family="Liberation Sans, sans-serif" font-size="10.61" font-weight="normal" fill="#f4f4f4" textLength="171.8" lengthAdjust="spacingAndGlyphs" >2# WDZN-BYJ-2X2.5-JDG20-CC,WC</text>
<text x="93" y="177.3" font-family="Liberation Sans, sans-serif" font-size="10.2" font-weight="normal" fill="#f4f4f4" textLength="12" lengthAdjust="spacingAndGlyphs" >6A</text>
<text x="99" y="460.6" font-family="Liberation Sans, sans-serif" font-size="10.2" font-weight="normal" fill="#f4f4f4" textLength="12" lengthAdjust="spacingAndGlyphs" >6A</text>
<text x="99" y="494.1" font-family="Liberation Sans, sans-serif" font-size="10.2" font-weight="normal" fill="#f4f4f4" textLength="12" lengthAdjust="spacingAndGlyphs" >6A</text>
<text x="236" y="160.4" font-family="Liberation Sans, sans-serif" font-size="9.36" font-weight="normal" fill="#f4f4f4" textLength="21" lengthAdjust="spacingAndGlyphs" >- 1F</text>
<text x="259" y="160.29" font-family="Liberation Serif, Noto Serif CJK SC, serif" font-size="7.83" font-weight="900" fill="#ffffff" textLength="51" lengthAdjust="spacingAndGlyphs">楼梯间疏散照明</text>
<text x="236" y="194.3" font-family="Liberation Sans, sans-serif" font-size="9.08" font-weight="normal" fill="#f4f4f4" textLength="21" lengthAdjust="spacingAndGlyphs" >- 1F</text>
<text x="259" y="194.2" font-family="Liberation Serif, Noto Serif CJK SC, serif" font-size="7.61" font-weight="900" fill="#ffffff" textLength="51" lengthAdjust="spacingAndGlyphs">楼梯间应急照明</text>
<text x="233.9" y="478.1" font-family="Liberation Sans, sans-serif" font-size="9.36" font-weight="normal" fill="#f4f4f4" textLength="24.1" lengthAdjust="spacingAndGlyphs" >9~RF</text>
<text x="259.5" y="477.99" font-family="Liberation Serif, Noto Serif CJK SC, serif" font-size="7.83" font-weight="900" fill="#ffffff" textLength="54.1" lengthAdjust="spacingAndGlyphs">电梯厅疏散照明</text>
<text x="233.9" y="511.6" font-family="Liberation Sans, sans-serif" font-size="9.36" font-weight="normal" fill="#f4f4f4" textLength="24.1" lengthAdjust="spacingAndGlyphs" >9~RF</text>
<text x="259.5" y="511.49" font-family="Liberation Serif, Noto Serif CJK SC, serif" font-size="7.83" font-weight="900" fill="#ffffff" textLength="54.1" lengthAdjust="spacingAndGlyphs">电梯厅疏散照明</text>
<text x="614.9" y="178.2" font-family="Liberation Sans, sans-serif" font-size="9.78" font-weight="normal" fill="#f4f4f4" textLength="34.6" lengthAdjust="spacingAndGlyphs" >L3.N,PE</text>
<text x="620.6" y="165.2" font-family="Liberation Sans, sans-serif" font-size="10.2" font-weight="normal" fill="#f4f4f4" textLength="40.9" lengthAdjust="spacingAndGlyphs" >+VE 30mA</text>
<text x="665" y="165.06" font-family="Liberation Serif, Noto Serif CJK SC, serif" font-size="8.48" font-weight="900" fill="#ffffff" textLength="37" lengthAdjust="spacingAndGlyphs">脱扣型电子式</text>
<text x="614.9" y="217.2" font-family="Liberation Sans, sans-serif" font-size="9.78" font-weight="normal" fill="#f4f4f4" textLength="34.6" lengthAdjust="spacingAndGlyphs" >L1.N,PE</text>
<text x="620.6" y="204.2" font-family="Liberation Sans, sans-serif" font-size="10.2" font-weight="normal" fill="#f4f4f4" textLength="40.9" lengthAdjust="spacingAndGlyphs" >+VE 30mA</text>
<text x="665" y="204.06" font-family="Liberation Serif, Noto Serif CJK SC, serif" font-size="8.48" font-weight="900" fill="#ffffff" textLength="37" lengthAdjust="spacingAndGlyphs">脱扣型电子式</text>
<text x="640.9" y="193.0" font-family="Liberation Sans, sans-serif" font-size="9.64" font-weight="normal" fill="#f4f4f4" textLength="69.1" lengthAdjust="spacingAndGlyphs" >RCBO C20A/1P+N</text>
<text x="614.9" y="256.1" font-family="Liberation Sans, sans-serif" font-size="9.78" font-weight="normal" fill="#f4f4f4" textLength="34.6" lengthAdjust="spacingAndGlyphs" >L2.N,PE</text>
<text x="640.9" y="241.4" font-family="Liberation Sans, sans-serif" font-size="9.64" font-weight="normal" fill="#f4f4f4" textLength="65.1" lengthAdjust="spacingAndGlyphs" >MCB C16A/1P</text>
<text x="614.9" y="295.0" font-family="Liberation Sans, sans-serif" font-size="9.78" font-weight="normal" fill="#f4f4f4" textLength="34.6" lengthAdjust="spacingAndGlyphs" >L3.N,PE</text>
<text x="620.6" y="282.0" font-family="Liberation Sans, sans-serif" font-size="10.2" font-weight="normal" fill="#f4f4f4" textLength="40.9" lengthAdjust="spacingAndGlyphs" >+VE 30mA</text>
<text x="665" y="281.86" font-family="Liberation Serif, Noto Serif CJK SC, serif" font-size="8.48" font-weight="900" fill="#ffffff" textLength="37" lengthAdjust="spacingAndGlyphs">脱扣型电子式</text>
<text x="640.9" y="270.8" font-family="Liberation Sans, sans-serif" font-size="9.64" font-weight="normal" fill="#f4f4f4" textLength="69.1" lengthAdjust="spacingAndGlyphs" >RCBO C16A/1P+N</text>
<text x="614.9" y="333.9" font-family="Liberation Sans, sans-serif" font-size="9.78" font-weight="normal" fill="#f4f4f4" textLength="49.0" lengthAdjust="spacingAndGlyphs" >L1~3.N,PE</text>
<text x="620.6" y="320.9" font-family="Liberation Sans, sans-serif" font-size="10.2" font-weight="normal" fill="#f4f4f4" textLength="40.9" lengthAdjust="spacingAndGlyphs" >+VE 30mA</text>
<text x="665" y="320.76" font-family="Liberation Serif, Noto Serif CJK SC, serif" font-size="8.48" font-weight="900" fill="#ffffff" textLength="37" lengthAdjust="spacingAndGlyphs">脱扣型电子式</text>
<text x="640.9" y="309.7" font-family="Liberation Sans, sans-serif" font-size="9.64" font-weight="normal" fill="#f4f4f4" textLength="69.1" lengthAdjust="spacingAndGlyphs" >RCBO C20A/3P+N</text>
<text x="782" y="165" font-family="Liberation Sans, sans-serif" font-size="11.17" font-weight="normal" fill="#f4f4f4" textLength="12" lengthAdjust="spacingAndGlyphs" >8#</text>
<text x="802.5" y="165" font-family="Liberation Sans, sans-serif" font-size="11.17" font-weight="normal" fill="#f4f4f4" textLength="78.0" lengthAdjust="spacingAndGlyphs" >WDZC-BYJ-3x2.</text>
<text x="802.5" y="178.8" font-family="Liberation Sans, sans-serif" font-size="9.78" font-weight="normal" fill="#f4f4f4" textLength="34.5" lengthAdjust="spacingAndGlyphs" >11F~RF</text>
<text x="839" y="178.58" font-family="Liberation Serif, Noto Serif CJK SC, serif" font-size="8.04" font-weight="900" fill="#ffffff" textLength="31.7" lengthAdjust="spacingAndGlyphs">电井插座</text>
<text x="782" y="204" font-family="Liberation Sans, sans-serif" font-size="11.17" font-weight="normal" fill="#f4f4f4" textLength="12" lengthAdjust="spacingAndGlyphs" >9#</text>
<text x="802.5" y="204" font-family="Liberation Sans, sans-serif" font-size="11.17" font-weight="normal" fill="#f4f4f4" textLength="78.0" lengthAdjust="spacingAndGlyphs" >WDZC-BYJ-3x4-</text>
<text x="802.5" y="217.6" font-family="Liberation Sans, sans-serif" font-size="9.78" font-weight="normal" fill="#f4f4f4" textLength="21.5" lengthAdjust="spacingAndGlyphs" >ALhk</text>
<text x="803" y="241.21" font-family="Liberation Serif, Noto Serif CJK SC, serif" font-size="7.28" font-weight="900" fill="#ffffff" textLength="15.6" lengthAdjust="spacingAndGlyphs">备用</text>
<text x="803" y="280.11" font-family="Liberation Serif, Noto Serif CJK SC, serif" font-size="7.28" font-weight="900" fill="#ffffff" textLength="15.6" lengthAdjust="spacingAndGlyphs">备用</text>
<text x="803" y="319.01" font-family="Liberation Serif, Noto Serif CJK SC, serif" font-size="7.28" font-weight="900" fill="#ffffff" textLength="15.6" lengthAdjust="spacingAndGlyphs">备用</text>
<text x="640.9" y="467.7" font-family="Liberation Sans, sans-serif" font-size="9.64" font-weight="normal" fill="#f4f4f4" textLength="65.1" lengthAdjust="spacingAndGlyphs" >MCB C16A/1P</text>
<text x="614.9" y="482.09999999999997" font-family="Liberation Sans, sans-serif" font-size="9.78" font-weight="normal" fill="#f4f4f4" textLength="34.6" lengthAdjust="spacingAndGlyphs" >L1,N,PE</text>
<text x="784" y="468.2" font-family="Liberation Sans, sans-serif" font-size="10.2" font-weight="normal" fill="#f4f4f4" textLength="10" lengthAdjust="spacingAndGlyphs" >1#</text>
<text x="802.3" y="468.2" font-family="Liberation Sans, sans-serif" font-size="10.2" font-weight="normal" fill="#f4f4f4" textLength="78.2" lengthAdjust="spacingAndGlyphs" >WDZC-BYJ-3x2.</text>
<text x="803" y="482.5" font-family="Liberation Sans, sans-serif" font-size="9.5" font-weight="normal" fill="#f4f4f4" textLength="32.5" lengthAdjust="spacingAndGlyphs" >2F~10F</text>
<text x="838" y="482.29" font-family="Liberation Serif, Noto Serif CJK SC, serif" font-size="7.83" font-weight="900" fill="#ffffff" textLength="33" lengthAdjust="spacingAndGlyphs">前室照明</text>
<text x="640.9" y="506.2" font-family="Liberation Sans, sans-serif" font-size="9.64" font-weight="normal" fill="#f4f4f4" textLength="65.1" lengthAdjust="spacingAndGlyphs" >MCB C16A/1P</text>
<text x="614.9" y="520.6" font-family="Liberation Sans, sans-serif" font-size="9.78" font-weight="normal" fill="#f4f4f4" textLength="34.6" lengthAdjust="spacingAndGlyphs" >L2,N,PE</text>
<text x="784" y="506.7" font-family="Liberation Sans, sans-serif" font-size="10.2" font-weight="normal" fill="#f4f4f4" textLength="10" lengthAdjust="spacingAndGlyphs" >2#</text>
<text x="802.3" y="506.7" font-family="Liberation Sans, sans-serif" font-size="10.2" font-weight="normal" fill="#f4f4f4" textLength="78.2" lengthAdjust="spacingAndGlyphs" >WDZC-BYJ-3x2.</text>
<text x="803" y="521.0" font-family="Liberation Sans, sans-serif" font-size="9.5" font-weight="normal" fill="#f4f4f4" textLength="32.5" lengthAdjust="spacingAndGlyphs" >2F~10F</text>
<text x="838" y="520.79" font-family="Liberation Serif, Noto Serif CJK SC, serif" font-size="7.83" font-weight="900" fill="#ffffff" textLength="33" lengthAdjust="spacingAndGlyphs">前室照明</text>
<text x="642.8" y="392.0" font-family="Liberation Sans, sans-serif" font-size="9.22" font-weight="normal" fill="#f4f4f4" textLength="21.4" lengthAdjust="spacingAndGlyphs" >SPD/4P</text>
<text x="642.8" y="402.90000000000003" font-family="Liberation Sans, sans-serif" font-size="9.22" font-weight="normal" fill="#f4f4f4" textLength="27.9" lengthAdjust="spacingAndGlyphs" >In &gt; 65kA</text>
<text x="642.8" y="413.8" font-family="Liberation Sans, sans-serif" font-size="9.22" font-weight="normal" fill="#f4f4f4" textLength="21.0" lengthAdjust="spacingAndGlyphs" >8/20us</text>
<text x="642.8" y="424.70000000000005" font-family="Liberation Sans, sans-serif" font-size="9.22" font-weight="normal" fill="#f4f4f4" textLength="29.7" lengthAdjust="spacingAndGlyphs" >Up&lt; 1.5kV</text>
<text x="645" y="368.8" font-family="Liberation Sans, sans-serif" font-size="8.66" font-weight="bold" fill="#f4f4f4" textLength="7" lengthAdjust="spacingAndGlyphs" >T1</text>
<text x="521.8" y="414.46" font-family="Liberation Serif, Noto Serif CJK SC, serif" font-size="8.48" font-weight="900" fill="#ffffff" textLength="49.2" lengthAdjust="spacingAndGlyphs">箱体厚度不大于</text>
<text x="571.3" y="414.4" font-family="Liberation Sans, sans-serif" font-size="9.5" font-weight="normal" fill="#f4f4f4" textLength="20.4" lengthAdjust="spacingAndGlyphs" >550mm</text>
<text x="523" y="453.3" font-family="Liberation Serif, serif" font-size="15.3" font-weight="bold" fill="#f4f4f4" textLength="24.5" lengthAdjust="spacingAndGlyphs" >ALG1</text>
<text x="548.5" y="453.3" font-family="Liberation Serif, Noto Serif CJK SC, serif" font-size="12.39" font-weight="900" fill="#ffffff" textLength="56.5" lengthAdjust="spacingAndGlyphs">(公共照明箱)</text>
<text x="523.5" y="467.9" font-family="Liberation Sans, sans-serif" font-size="9.92" font-weight="normal" fill="#f4f4f4" textLength="43.7" lengthAdjust="spacingAndGlyphs" >Pe=10kW</text>
<text x="523.5" y="479.7" font-family="Liberation Sans, sans-serif" font-size="9.92" font-weight="normal" fill="#f4f4f4" textLength="33.5" lengthAdjust="spacingAndGlyphs" >Kx=0.9</text>
<text x="523.5" y="491.5" font-family="Liberation Sans, sans-serif" font-size="9.92" font-weight="normal" fill="#f4f4f4" textLength="51.1" lengthAdjust="spacingAndGlyphs" >Cosφ=0.85</text>
<text x="523.5" y="503.3" font-family="Liberation Sans, sans-serif" font-size="9.92" font-weight="normal" fill="#f4f4f4" textLength="44.5" lengthAdjust="spacingAndGlyphs" >Ijs=12.9A</text>
<text x="38" y="173.6" font-family="Liberation Sans, Noto Sans CJK SC, sans-serif" font-size="12.3" fill="#dfe3e8" textLength="104" lengthAdjust="spacingAndGlyphs">[-][俯视][二维线框]</text>
<text x="70" y="403" font-family="Liberation Sans, Noto Sans CJK SC, sans-serif" font-size="11.6" fill="#f4f4f4" text-anchor="end">(公共照明箱)</text>
<line x1="33" y1="307.5" x2="394" y2="307.5" stroke="#f4f4f4" stroke-width="1"/>
<line x1="411" y1="307.5" x2="880" y2="307.5" stroke="#f4f4f4" stroke-width="1"/>
<line x1="402.5" y1="155" x2="402.5" y2="299" stroke="#f4f4f4" stroke-width="1"/>
<line x1="402.5" y1="316" x2="402.5" y2="516" stroke="#f4f4f4" stroke-width="1"/>
<rect x="394.500" y="299.500" width="16" height="16" stroke="#f4f4f4" stroke-width="1" fill="none"/>
<rect x="244" y="490" width="57" height="25" fill="#212830" fill-opacity="0.62"/>
<rect x="301" y="490" width="369" height="24.800" fill="#ffffff" fill-opacity="0.68"/>
<path d="M247.500 492V510M250.500 492V510" stroke="#d0d3d8" stroke-width="1.200" stroke-dasharray="1.200 1.400"/>
<path d="M260 497.500L268.500 506M268.500 497.500L260 506" stroke="#aab0b9" stroke-width="1.700"/>
<path d="M284 508L291 500.500" stroke="#aab0b9" stroke-width="2.600"/><path d="M293.800 496.200L291 499L292.600 501.200L295.800 499.600C296.500 501.500 294 504 291.500 503L289 500.500C288 498 290.500 495.300 293.800 496.200Z" fill="#aab0b9"/>
<rect x="305.500" y="496.500" width="15" height="10.500" stroke="#8b8b8b" stroke-width="1" fill="#d9d9d9" fill-opacity="0.6"/><path d="M307.500 499L310.500 501.200L307.500 503.500" stroke="#6a6a6a" stroke-width="1" fill="none"/><path d="M311.500 504.500H315" stroke="#6a6a6a" stroke-width="1"/>
<path d="M324 499.500H331.500L327.750 503.500Z" fill="#8a8a8a"/>
<text x="338.500" y="505.900" font-family="Liberation Sans, Noto Sans CJK SC, sans-serif" font-size="12.6" font-style="italic" fill="#787878" textLength="53" lengthAdjust="spacing">键入命令</text>
<path d="M660.500 504.500H668.500L664.500 500Z" fill="#555b63"/>
</svg>
<div class="abs" style="left:1px;top:155px;width:32px;height:365px;background:#262d38"></div>
<div class="abs" style="left:4px;top:155px;width:25px;height:365px;background:#3b4453"></div>
<div class="abs" style="left:880px;top:155px;width:33px;height:365px;background:#262d38"></div>
<div class="abs" style="left:884px;top:155px;width:25px;height:365px;background:#3b4453"></div>
<svg class="abs" style="left:8px;top:158px" width="14" height="4" viewBox="0 0 14 4" shape-rendering="crispEdges"><path d="M0 0.5H14M0 2.5H14" stroke="#c9cdd3" stroke-width="1" stroke-dasharray="1 1" fill="none"/></svg>
<svg class="abs" style="left:889px;top:158px" width="14" height="4" viewBox="0 0 14 4" shape-rendering="crispEdges"><path d="M0 0.5H14M0 2.5H14" stroke="#c9cdd3" stroke-width="1" stroke-dasharray="1 1" fill="none"/></svg>
<svg class="abs" style="left:8px;top:167px" width="16" height="16" viewBox="0 0 16 16" overflow="visible"><path d="M1.5 14.5L14.5 1.5" stroke="#e6e8eb" stroke-width="1.3"/><circle cx="1.5" cy="14.5" r="1.3" fill="#e6e8eb"/><circle cx="14.5" cy="1.5" r="1.3" fill="#e6e8eb"/></svg>
<svg class="abs" style="left:8px;top:189px" width="16" height="16" viewBox="0 0 16 16" overflow="visible"><path d="M3 13L13 3" stroke="#e6e8eb" stroke-width="1.3"/><path d="M16 0L15 5.5L10.5 1Z M0 16L1 10.5L5.5 15Z" fill="#e6e8eb"/><circle cx="6" cy="10" r="1.1" fill="#e6e8eb"/><circle cx="10" cy="6" r="1.1" fill="#e6e8eb"/></svg>
<svg class="abs" style="left:8px;top:211px" width="16" height="16" viewBox="0 0 16 16" overflow="visible"><path d="M1 11.5H9" stroke="#e6e8eb" stroke-width="1.3" stroke-dasharray="2.5 1.5"/><path d="M10 11.5C16 11.5 16 3 11 3" stroke="#e6e8eb" stroke-width="1.4" fill="none"/><circle cx="1" cy="11.5" r="1.2" fill="#e6e8eb"/><circle cx="10" cy="11.5" r="1.2" fill="#e6e8eb"/><circle cx="10.5" cy="3" r="1.2" fill="#e6e8eb"/></svg>
<svg class="abs" style="left:8px;top:233px" width="16" height="16" viewBox="0 0 16 16" overflow="visible"><path d="M8 1L15 6.3L12.3 14.8H3.7L1 6.3Z" stroke="#e6e8eb" stroke-width="1.4" fill="none"/><circle cx="8" cy="8.5" r="1.2" fill="#e6e8eb"/></svg>
<svg class="abs" style="left:8px;top:255px" width="16" height="16" viewBox="0 0 16 16" overflow="visible"><path d="M1.5 2.5H13.5V13.5H1.5Z" stroke="#e6e8eb" stroke-width="1.4" fill="none"/><circle cx="1.5" cy="2.5" r="1.4" fill="#e6e8eb"/><circle cx="14" cy="14" r="1.4" fill="#e6e8eb"/></svg>
<svg class="abs" style="left:8px;top:277px" width="16" height="16" viewBox="0 0 16 16" overflow="visible"><path d="M2 15C2 8 7 3 14 2" stroke="#e6e8eb" stroke-width="1.4" fill="none" stroke-dasharray="3 1.5"/><circle cx="2" cy="15" r="1.2" fill="#e6e8eb"/><circle cx="14" cy="2" r="1.2" fill="#e6e8eb"/><circle cx="5" cy="7" r="1.2" fill="#e6e8eb"/></svg>
<svg class="abs" style="left:8px;top:299px" width="16" height="16" viewBox="0 0 16 16" overflow="visible"><circle cx="8" cy="8" r="7.2" stroke="#e6e8eb" stroke-width="1.3" fill="none"/><path d="M8 8L12 4" stroke="#6db3ea" stroke-width="1.2"/><circle cx="8" cy="8" r="1.2" fill="#e6e8eb"/></svg>
<svg class="abs" style="left:8px;top:322px" width="16" height="16" viewBox="0 0 16 16" overflow="visible"><path d="M4 13C1 13 0.5 9.5 3 9C1.5 6 4.5 4 6.5 5.5C7.5 2.5 11.5 3 11.5 6C14.5 5.5 15.5 9 13.5 10C15.5 12 13 14.5 11 13C10 15.5 6 15.5 4 13Z" stroke="#e6e8eb" stroke-width="1.3" fill="none"/></svg>
<svg class="abs" style="left:8px;top:344px" width="16" height="16" viewBox="0 0 16 16" overflow="visible"><path d="M1.5 14C3 2 6 3 8 8C10 13 13 13 14.5 1.5" stroke="#e6e8eb" stroke-width="1.4" fill="none" stroke-dasharray="3 1.3"/><circle cx="1.5" cy="14" r="1.2" fill="#e6e8eb"/><circle cx="4.5" cy="4" r="1.2" fill="#e6e8eb"/><circle cx="11.5" cy="12" r="1.2" fill="#e6e8eb"/><circle cx="14.5" cy="1.5" r="1.2" fill="#e6e8eb"/></svg>
<svg class="abs" style="left:8px;top:366px" width="16" height="16" viewBox="0 0 16 16" overflow="visible"><ellipse cx="8" cy="8" rx="7" ry="4.3" stroke="#e6e8eb" stroke-width="1.4" fill="none" stroke-dasharray="3.4 1.6"/><circle cx="8" cy="3.7" r="1.2" fill="#e6e8eb"/><circle cx="15" cy="8" r="1.2" fill="#e6e8eb"/></svg>
<svg class="abs" style="left:8px;top:388px" width="16" height="16" viewBox="0 0 16 16" overflow="visible"><path d="M14.5 9C14.5 2 2 2 2 9C2 12 4 13.5 6.5 13.5" stroke="#e6e8eb" stroke-width="1.4" fill="none" stroke-dasharray="3.4 1.6"/><circle cx="9" cy="10.5" r="1.3" fill="#6db3ea"/><circle cx="9" cy="14" r="1.3" fill="#6db3ea"/></svg>
<svg class="abs" style="left:8px;top:410px" width="16" height="16" viewBox="0 0 16 16" overflow="visible"><path d="M7 0H13L16 3V13H7Z" fill="#6db3ea"/><path d="M13 0V3H16Z" fill="#d9eaf8"/><rect x="1.5" y="7.5" width="8" height="6" fill="#3b4453" stroke="#d9dce1" stroke-width="1.3"/><circle cx="10.5" cy="13" r="2.8" fill="#3b4453" stroke="#aeb4bd" stroke-width="1.2"/><path d="M0 7H3M0 14.5H3" stroke="#e6e8eb" stroke-width="1.2"/><path d="M16 16H12.5L16 12.5Z" fill="#fff"/></svg>
<svg class="abs" style="left:8px;top:432px" width="16" height="16" viewBox="0 0 16 16" overflow="visible"><rect x="1.5" y="6.5" width="8" height="7" fill="none" stroke="#d9dce1" stroke-width="1.3"/><circle cx="11" cy="12.5" r="3" fill="#3b4453" stroke="#aeb4bd" stroke-width="1.2"/><path d="M0 6H3M0 14.5H3" stroke="#e6e8eb" stroke-width="1.2"/><path d="M12 0L13 2.7L15.8 1.6L14.6 4.2L17 5.5L14.3 6.3L15 9L12.5 7.5L11 10L10.4 7L7.5 7.3L9.6 5.2L7.6 3L10.5 3.3Z" fill="#f7c640"/></svg>
<svg class="abs" style="left:8px;top:454px" width="16" height="16" viewBox="0 0 16 16" overflow="visible"><circle cx="8" cy="2.5" r="1.3" fill="#e6e8eb"/><circle cx="2.5" cy="8" r="1.3" fill="#e6e8eb"/><circle cx="13.5" cy="8" r="1.3" fill="#e6e8eb"/><circle cx="8" cy="13.5" r="1.3" fill="#e6e8eb"/></svg>
<svg class="abs" style="left:8px;top:476px" width="16" height="16" viewBox="0 0 16 16" overflow="visible"><rect x="3" y="3" width="10" height="10" fill="#6db3ea"/><path d="M3 8L8 3M3 13L13 3M8 13L13 8M3 10.5L10.5 3M5.5 13L13 5.5" stroke="#2d3440" stroke-width="0.9"/><path d="M3 0V16M13 0V16M0 3H16M0 13H16" stroke="#e6e8eb" stroke-width="1.2"/></svg>
<svg class="abs" style="left:8px;top:498px" width="16" height="16" viewBox="0 0 16 16" overflow="visible"><defs><linearGradient id="gg" x1="0" y1="0" x2="0" y2="1"><stop offset="0" stop-color="#3f79b8"/><stop offset="1" stop-color="#b9d8f2"/></linearGradient></defs><rect x="3" y="3" width="10" height="10" fill="url(#gg)"/><path d="M3 0V16M13 0V16M0 3H16M0 13H16" stroke="#e6e8eb" stroke-width="1.2"/></svg>
<svg class="abs" style="left:888px;top:166px" width="16" height="17" viewBox="0 0 16 17" overflow="visible"><path d="M2 11L11 1.5L16 1V5L7 15Z" fill="#f0c878"/><path d="M11 1.5L16 1V5Z" fill="#f4f4f4"/><path d="M2 11L4.5 8.4L9.5 12.4L7 15C5 16.5 0.5 13.5 2 11Z" fill="#ea5f78"/><path d="M0 16.5H16" stroke="#6db3ea" stroke-width="1.2"/></svg>
<svg class="abs" style="left:888px;top:189px" width="16" height="17" viewBox="0 0 16 17" overflow="visible"><circle cx="3.5" cy="4" r="2.9" stroke="#e6e8eb" stroke-width="1.3" fill="none"/><path d="M8 3H13V7" stroke="#e6e8eb" stroke-width="1.3" fill="none"/><path d="M10.8 6.5H15.2L13 9.5Z" fill="#e6e8eb"/><circle cx="7" cy="12.5" r="2.9" stroke="#6db3ea" stroke-width="1.3" fill="none"/><circle cx="12.7" cy="12.5" r="2.9" stroke="#6db3ea" stroke-width="1.3" fill="none"/></svg>
<svg class="abs" style="left:888px;top:211px" width="16" height="17" viewBox="0 0 16 17" overflow="visible"><path d="M6.5 1.5V14.5H0.8Z" stroke="#e6e8eb" stroke-width="1.3" fill="none"/><path d="M9.5 1.5V14.5H15.2Z" stroke="#6db3ea" stroke-width="1.3" fill="#2f5f8f"/></svg>
<svg class="abs" style="left:888px;top:234px" width="16" height="17" viewBox="0 0 16 17" overflow="visible"><path d="M16 1H7.5C-2 1 -2 15 7.5 15H16" stroke="#e6e8eb" stroke-width="1.3" fill="none"/><path d="M16 4.5H8C2.5 4.5 2.5 11.5 8 11.5H16" stroke="#6db3ea" stroke-width="1.3" fill="none"/><path d="M16 7H8.5C7 7 7 9 8.5 9H16" stroke="#e6e8eb" stroke-width="1.1" fill="none"/></svg>
<svg class="abs" style="left:888px;top:256px" width="16" height="17" viewBox="0 0 16 17" overflow="visible"><rect x="1" y="1" width="5" height="5" stroke="#e6e8eb" stroke-width="1.2" fill="none"/><rect x="9.5" y="1" width="5" height="5" stroke="#6db3ea" stroke-width="1.2" fill="none"/><rect x="1" y="9.5" width="5" height="5" stroke="#6db3ea" stroke-width="1.2" fill="none"/><rect x="9.5" y="9.5" width="5" height="5" stroke="#6db3ea" stroke-width="1.2" fill="none"/><path d="M16 16H12.5L16 12.5Z" fill="#fff"/></svg>
<svg class="abs" style="left:888px;top:277px" width="16" height="17" viewBox="0 0 16 17" overflow="visible"><path d="M8 0L11 3.5H9V7H12.5V5L16 8L12.5 11V9H9V12.5H11L8 16L5 12.5H7V9H3.5V11L0 8L3.5 5V7H7V3.5H5Z" fill="#eef0f2"/></svg>
<svg class="abs" style="left:888px;top:299px" width="16" height="17" viewBox="0 0 16 17" overflow="visible"><path d="M9 2.5A6.3 6.3 0 1 0 14.3 8" stroke="#e6e8eb" stroke-width="1.4" fill="none"/><path d="M8 0L12.5 2.5L8.5 5.5Z" fill="#e6e8eb"/></svg>
<svg class="abs" style="left:888px;top:322px" width="16" height="17" viewBox="0 0 16 17" overflow="visible"><rect x="0.7" y="0.7" width="14.6" height="14.6" stroke="#6db3ea" stroke-width="1.2" fill="none"/><rect x="0.7" y="8" width="7.3" height="7.3" stroke="#e6e8eb" stroke-width="1.3" fill="#3b4453"/></svg>
<svg class="abs" style="left:888px;top:343px" width="16" height="17" viewBox="0 0 16 17" overflow="visible"><path d="M0.7 1H6.5V14.5H0.7Z" stroke="#e6e8eb" stroke-width="1.3" fill="none"/><path d="M9 1H11L15.5 14.5H9" stroke="#6db3ea" stroke-width="1.3" fill="none"/><path d="M4 10.5H10" stroke="#e6e8eb" stroke-width="1.3"/><path d="M9 8L12.5 10.5L9 13Z" fill="#e6e8eb"/></svg>
<svg class="abs" style="left:888px;top:365px" width="16" height="17" viewBox="0 0 16 17" overflow="visible"><path d="M0 1.5H16" stroke="#6db3ea" stroke-width="1.2" stroke-dasharray="2 1.3"/><path d="M6 2L11 11.5M11.5 2L8 9" stroke="#eef0f2" stroke-width="1.8"/><ellipse cx="8.5" cy="13.3" rx="1.6" ry="2.2" stroke="#eef0f2" stroke-width="1.3" fill="none"/><ellipse cx="12.5" cy="12.3" rx="2.2" ry="1.7" stroke="#eef0f2" stroke-width="1.3" fill="none"/></svg>
<svg class="abs" style="left:888px;top:388px" width="16" height="17" viewBox="0 0 16 17" overflow="visible"><path d="M13.5 0.5V13.5" stroke="#eef0f2" stroke-width="1.4"/><path d="M1 5H8" stroke="#eef0f2" stroke-width="1.3"/><path d="M7 2.5L11 5L7 7.5Z" fill="#eef0f2"/><path d="M0 10.5H13" stroke="#eef0f2" stroke-width="1.2" stroke-dasharray="2 1.3"/></svg>
<svg class="abs" style="left:888px;top:409px" width="16" height="17" viewBox="0 0 16 17" overflow="visible"><path d="M9 3.5H0.7V15.3H15.3V3.5H12.5" stroke="#e6e8eb" stroke-width="1.3" fill="none"/><path d="M10.8 0.5V6" stroke="#e6e8eb" stroke-width="1.3"/></svg>
<svg class="abs" style="left:888px;top:431px" width="16" height="17" viewBox="0 0 16 17" overflow="visible"><path d="M5.5 3.5H0.7V14.3H15.3V3.5H10.5" stroke="#e6e8eb" stroke-width="1.3" fill="none"/><path d="M5.5 0.5V6M10.5 0.5V6" stroke="#e6e8eb" stroke-width="1.3"/></svg>
<svg class="abs" style="left:888px;top:451px" width="16" height="17" viewBox="0 0 16 17" overflow="visible"><path d="M0 8H5M11 8H16" stroke="#eef0f2" stroke-width="1.4"/><path d="M3.5 5L8 8L3.5 11ZM12.5 5L8 8L12.5 11Z" fill="#6db3ea"/></svg>
<svg class="abs" style="left:888px;top:474px" width="16" height="17" viewBox="0 0 16 17" overflow="visible"><path d="M0.7 16V11L9 1.5H16" stroke="#e6e8eb" stroke-width="1.3" fill="none"/><path d="M0.7 11V9.5M9 1.5H10.5" stroke="#e6e8eb" stroke-width="1.3"/><path d="M0.7 11L9 1.5" stroke="#6db3ea" stroke-width="1.3"/><path d="M0.7 16V11.5M9.5 1.5H16" stroke="#e6e8eb" stroke-width="1.4"/></svg>
<svg class="abs" style="left:888px;top:497px" width="16" height="17" viewBox="0 0 16 17" overflow="visible"><path d="M0.7 16V11M10 0.7H16" stroke="#e6e8eb" stroke-width="1.4" fill="none"/><path d="M0.7 11C0.7 5 5 0.7 10 0.7" stroke="#6db3ea" stroke-width="1.4" fill="none"/></svg>
<div class="abs" style="left:1px;top:515.700px;width:912px;height:4px;background:#3a4351"></div>
<svg class="abs" style="left:1px;top:520px" width="260" height="25" viewBox="0 0 260 25" ><polygon points="20,0 69,0 59,24 10,24" fill="#3b4453"/><path d="M121.5 3L116 22M176.500 3L171 22M216.5 3L211 22" stroke="#4a5363" stroke-width="1.2"/><path d="M188 12H200M194 6V18" stroke="#eceef1" stroke-width="1.8"/></svg>
<div class="t" id="lt0" style="left:29px;top:526px;font-size:12px;font-weight:bold;color:#f4f5f7">模型</div>
<div class="t" id="lt1" style="left:77px;top:526px;font-size:12px;color:#e3e6ea">布局1</div>
<div class="t" id="lt2" style="left:131px;top:526px;font-size:12px;color:#e3e6ea">布局2</div>
<div class="abs" style="left:361px;top:522px;width:30px;height:23.500px;background:#3b4453"></div>
<div class="abs" style="left:394px;top:522px;width:64px;height:23.500px;background:#3b4453"></div>
<div class="abs" style="left:461px;top:522px;width:169px;height:23.500px;background:#3b4453"></div>
<div class="abs" style="left:633px;top:522px;width:106px;height:23.500px;background:#3b4453"></div>
<div class="abs" style="left:742px;top:522px;width:39px;height:23.500px;background:#3b4453"></div>
<div class="abs" style="left:783px;top:522px;width:25px;height:23.500px;background:#3b4453"></div>
<div class="abs" style="left:810px;top:522px;width:24px;height:23.500px;background:#3b4453"></div>
<div class="abs" style="left:836px;top:522px;width:23px;height:23.500px;background:#3b4453"></div>
<div class="abs" style="left:862px;top:522px;width:48px;height:23.500px;background:#3b4453"></div>
<div class="abs" style="left:486px;top:522.500px;width:22px;height:22.500px;background:#5b8fcf"></div>
<div class="abs" style="left:567px;top:522.500px;width:22px;height:22.500px;background:#5b8fcf"></div>
<div class="abs" style="left:591px;top:522.500px;width:22px;height:22.500px;background:#5b8fcf"></div>
<div class="abs" style="left:633px;top:522.500px;width:23px;height:22.500px;background:#5b8fcf"></div>
<div class="t" id="st_m" style="left:364px;top:527.5px;font-size:12px;font-weight:bold;color:#f0f2f4">模型</div>
<svg class="abs" style="left:398px;top:526px" width="15" height="15" viewBox="0 0 15 15" overflow="visible"><path d="M3.500 0V15M7.500 0V15M11.500 0V15M0 3.500H15M0 7.500H15M0 11.500H15" stroke="#f2f4f6" stroke-width="1" shape-rendering="crispEdges"/></svg>
<svg class="abs" style="left:424px;top:528px" width="12" height="12" viewBox="0 0 12 12" overflow="visible"><rect x="0" y="0" width="2" height="2" fill="#f2f4f6"/><rect x="0" y="5" width="2" height="2" fill="#f2f4f6"/><rect x="0" y="10" width="2" height="2" fill="#f2f4f6"/><rect x="5" y="0" width="2" height="2" fill="#f2f4f6"/><rect x="5" y="5" width="2" height="2" fill="#f2f4f6"/><rect x="5" y="10" width="2" height="2" fill="#f2f4f6"/><rect x="10" y="0" width="2" height="2" fill="#f2f4f6"/><rect x="10" y="5" width="2" height="2" fill="#f2f4f6"/><rect x="10" y="10" width="2" height="2" fill="#f2f4f6"/></svg>
<svg class="abs" style="left:446px;top:532px" width="8.4" height="4.2" viewBox="0 0 8.4 4.2" overflow="visible"><path d="M0 0H8.400L4.200 4.200Z" fill="#dfe2e6"/></svg>
<svg class="abs" style="left:465px;top:526px" width="17" height="17" viewBox="0 0 17 17" overflow="visible"><path d="M0.500 0.400V15.500H16M0.500 10H5V15.500" stroke="#f2f4f6" stroke-width="1.100" fill="none"/></svg>
<svg class="abs" style="left:489px;top:526px" width="17" height="17" viewBox="0 0 17 17" overflow="visible"><circle cx="6.500" cy="8.200" r="6.100" stroke="#fff" stroke-width="1.200" fill="none"/><path d="M16.400 8.200H7.400L13.700 1.400" stroke="#fff" stroke-width="1.200" fill="none"/></svg>
<svg class="abs" style="left:513px;top:532px" width="8.4" height="4.2" viewBox="0 0 8.4 4.2" overflow="visible"><path d="M0 0H8.400L4.200 4.200Z" fill="#dfe2e6"/></svg>
<svg class="abs" style="left:529px;top:525px" width="18" height="19" viewBox="0 0 18 19" overflow="visible"><path d="M7.300 1.200V15.800" stroke="#46c878" stroke-width="1.100"/><path d="M1 2L13.700 15" stroke="#f05068" stroke-width="1.100"/><rect x="6" y="7.200" width="2.600" height="2.600" fill="#3b4453" stroke="#f2f4f6" stroke-width="0.900"/></svg>
<svg class="abs" style="left:553px;top:532px" width="8.4" height="4.2" viewBox="0 0 8.4 4.2" overflow="visible"><path d="M0 0H8.400L4.200 4.200Z" fill="#dfe2e6"/></svg>
<svg class="abs" style="left:570px;top:526px" width="17" height="17" viewBox="0 0 17 17" overflow="visible"><path d="M16 13.600H0.300L12.200 2.200" stroke="#fff" stroke-width="1.200" fill="none"/><rect x="5.300" y="6.300" width="2.600" height="2.600" fill="#fff"/></svg>
<svg class="abs" style="left:594px;top:526px" width="17" height="17" viewBox="0 0 17 17" overflow="visible"><rect x="2.500" y="2.600" width="13.300" height="12.400" stroke="#fff" stroke-width="1.100" fill="none"/><rect x="0.500" y="0.500" width="4.200" height="4.200" stroke="#fff" stroke-width="1.100" fill="#5b8fcf"/></svg>
<svg class="abs" style="left:617.6px;top:532px" width="8.4" height="4.2" viewBox="0 0 8.4 4.2" overflow="visible"><path d="M0 0H8.400L4.200 4.200Z" fill="#dfe2e6"/></svg>
<svg class="abs" style="left:636px;top:525px" width="18" height="18" viewBox="0 0 18 18" overflow="visible"><path d="M8 1.800L9.500 5L11.300 10L15 17L10.500 15.300L8 11.800L5.500 15.300L1 17L4.700 10L6.500 5Z" fill="#fff"/><circle cx="14" cy="5" r="2.200" stroke="#fff" stroke-width="1.100" fill="none"/></svg>
<svg class="abs" style="left:662px;top:525px" width="18" height="18" viewBox="0 0 18 18" overflow="visible"><path d="M8 1.800L9.500 5L11.300 10L15 17L10.500 15.300L8 11.800L5.500 15.300L1 17L4.700 10L6.500 5Z" fill="#e3e6ea"/><path d="M14.500 1L12 4.500H14L12.500 8L16.500 3.500H14.500L16 1Z" fill="#e3e6ea"/></svg>
<svg class="abs" style="left:686px;top:525px" width="16" height="18" viewBox="0 0 16 18" overflow="visible"><path d="M8 1.800L9.500 5L11.300 10L15 17L10.500 15.300L8 11.800L5.500 15.300L1 17L4.700 10L6.500 5Z" fill="#e3e6ea"/></svg>
<div class="t" id="st_11" style="left:709.500px;top:528.300px;font-size:11px;letter-spacing:-1px;font-weight:bold;color:#f0f2f4">1:1</div>
<svg class="abs" style="left:727.3px;top:532px" width="8.4" height="4.2" viewBox="0 0 8.4 4.2" overflow="visible"><path d="M0 0H8.400L4.200 4.200Z" fill="#dfe2e6"/></svg>
<svg class="abs" style="left:746px;top:526px" width="16" height="16" viewBox="0 0 16 16" overflow="visible"><g transform="translate(8,8)"><rect x="-1.800" y="-8.200" width="3.600" height="16.400" fill="#e6e8eb" transform="rotate(0)"/><rect x="-1.800" y="-8.200" width="3.600" height="16.400" fill="#e6e8eb" transform="rotate(45)"/><rect x="-1.800" y="-8.200" width="3.600" height="16.400" fill="#e6e8eb" transform="rotate(90)"/><rect x="-1.800" y="-8.200" width="3.600" height="16.400" fill="#e6e8eb" transform="rotate(135)"/><circle r="5.600" fill="#e6e8eb"/><circle r="2.400" fill="#3b4453"/></g></svg>
<svg class="abs" style="left:769px;top:532px" width="8.4" height="4.2" viewBox="0 0 8.4 4.2" overflow="visible"><path d="M0 0H8.400L4.200 4.200Z" fill="#dfe2e6"/></svg>
<svg class="abs" style="left:787px;top:526px" width="17" height="17" viewBox="0 0 17 17" overflow="visible"><path d="M8.500 0V17M0 8.500H17" stroke="#eef0f2" stroke-width="1.800"/></svg>
<svg class="abs" style="left:813px;top:526px" width="19" height="17" viewBox="0 0 19 17" overflow="visible"><rect x="1.200" y="0.600" width="6.300" height="6.300" stroke="#eef0f2" stroke-width="1.100" fill="none"/><circle cx="13.800" cy="6.500" r="3.100" stroke="#eef0f2" stroke-width="1.100" fill="none"/><path d="M7.400 10L10.900 15.500H3.900Z" stroke="#eef0f2" stroke-width="1.100" fill="none"/></svg>
<svg class="abs" style="left:839px;top:525px" width="18" height="18" viewBox="0 0 18 18" overflow="visible"><rect x="6.500" y="4" width="8" height="8.500" fill="#2f74c0"/><path d="M10.500 2L15.500 5L10.500 7Z" fill="#8fa6c4"/><path d="M4.500 4V11.500M4.500 4H13" stroke="#f2f4f6" stroke-width="1.200" fill="none"/><circle cx="4.500" cy="4" r="1.900" fill="#3b4453" stroke="#f2f4f6" stroke-width="1.100"/><rect x="1" y="10.500" width="5.500" height="5" fill="#f2b632"/><path d="M8 13L11 16.300L16.500 9.800" stroke="#4cba62" stroke-width="2.200" fill="none"/></svg>
<svg class="abs" style="left:866px;top:528px" width="17" height="12.5" viewBox="0 0 17 12.5" overflow="visible"><rect x="0.600" y="0.600" width="15.600" height="11.200" stroke="#eef0f2" stroke-width="1.200" fill="none"/><path d="M9.500 3H13V6.500ZM3.500 9.500V6L7 9.500Z" fill="#d6dae0"/><path d="M12.500 3.500L9.500 6.300M4 9L7 6.200" stroke="#d6dae0" stroke-width="1.100"/></svg>
<svg class="abs" style="left:890px;top:527px" width="17" height="14" viewBox="0 0 17 14" overflow="visible"><path d="M0 1.500H16.500M0 7.300H16.500M0 13.100H16.500" stroke="#eef0f2" stroke-width="2"/></svg>
<div class="abs" style="left:0;top:550.3px;width:916px;height:1.3px;background:#15446c"></div>
<div class="abs" style="left:0;top:551.5px;width:916px;height:1.5px;background:#1f8ad8"></div>
<div class="abs" style="left:1.1px;top:0;width:1.1px;height:553px;background:#17406a"></div>
<div class="abs" style="left:0;top:0;width:1.2px;height:553px;background:#2b8cd8"></div>
<div class="abs" style="left:912.5px;top:0;width:1.7px;height:553px;background:#185a94"></div>
<div class="abs" style="left:914px;top:0;width:2px;height:553px;background:#2087d6"></div>
<div class="abs" style="left:0;top:0;width:916px;height:1.2px;background:#3a96dc"></div>
</div>
</body></html>
